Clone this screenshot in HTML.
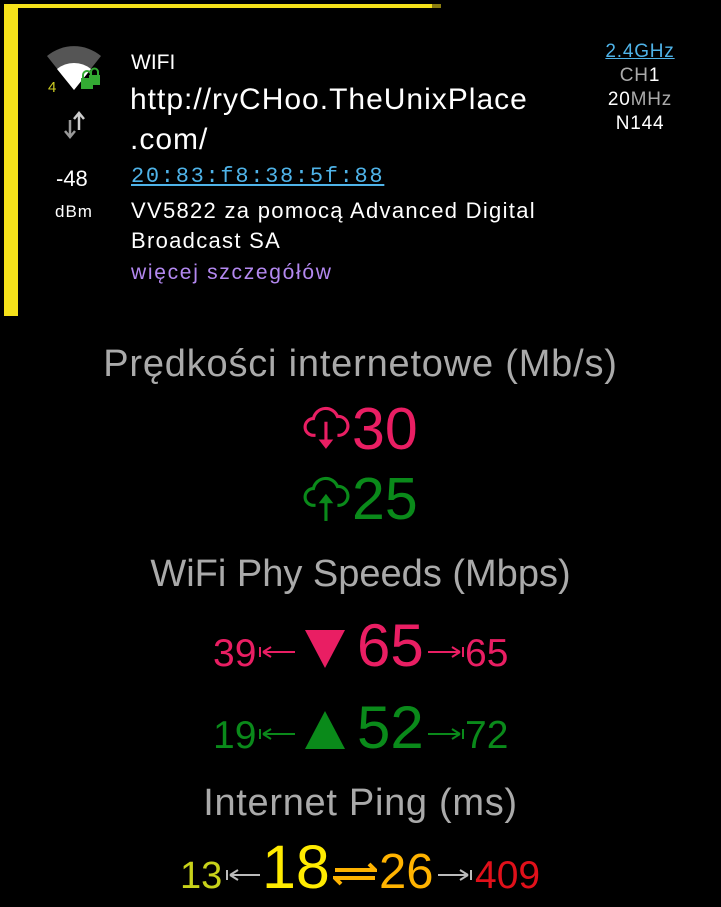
<!DOCTYPE html>
<html><head><meta charset="utf-8"><style>
html,body{margin:0;padding:0;background:#000;width:721px;height:907px;overflow:hidden;font-family:"Liberation Sans","DejaVu Sans",sans-serif;color:#fff}
.abs{position:absolute;white-space:nowrap;line-height:1}
.c{position:absolute;left:0;width:721px;text-align:center;white-space:nowrap;line-height:1}
</style></head><body>
<div class="abs" style="left:4px;top:4px;width:428px;height:4px;background:#f5e11a"></div>
<div class="abs" style="left:432px;top:4px;width:9px;height:4px;background:#8a7d10"></div>
<div class="abs" style="left:4px;top:4px;width:14px;height:312px;background:#f5e11a"></div>

<svg class="abs" style="left:44px;top:44px" width="64" height="56" viewBox="0 0 64 56">
<path d="M3 12 A42 42 0 0 1 57 12 L30 46 Z" fill="#555"/>
<path d="M13 25 A27 27 0 0 1 47 25 L30 46 Z" fill="#fff"/>
<text x="4" y="48" font-size="15" fill="#cc2" font-family="Liberation Sans">4</text>
<rect x="37" y="34" width="12" height="11" fill="#3a3"/><path d="M39 34v-3a4 4 0 0 1 8 0v3" stroke="#3a3" stroke-width="2" fill="none"/>
<rect x="45" y="31" width="11" height="10" fill="#3a3"/><path d="M47 31v-3a3.5 3.5 0 0 1 7 0v3" stroke="#3a3" stroke-width="2" fill="none"/>
</svg>
<svg class="abs" style="left:62px;top:110px" width="26" height="30" viewBox="0 0 26 30">
<path d="M8 10v16M3 21l5 6 5-6" stroke="#999" stroke-width="2.5" fill="none"/>
<path d="M17 20V4M12 9l5-6 5 6" stroke="#ccc" stroke-width="2.5" fill="none"/>
</svg>
<div class="abs" style="left:56px;top:168px;font-size:22px">-48</div>
<div class="abs" style="left:55px;top:203px;font-size:17px;letter-spacing:1px">dBm</div>

<div class="abs" style="left:131px;top:52px;font-size:21px">WIFI</div>
<div class="abs" style="left:130px;top:80px;font-size:30px;letter-spacing:1px;line-height:40px">http://ryCHoo.TheUnixPlace<br>.com/</div>
<div class="abs" style="left:131px;top:166px;font-size:22px;letter-spacing:1.7px;font-family:'Liberation Mono',monospace;color:#4fb3e8;text-decoration:underline">20:83:f8:38:5f:88</div>
<div class="abs" style="left:131px;top:196px;font-size:22px;letter-spacing:1.3px;line-height:30px">VV5822 za pomocą Advanced Digital<br>Broadcast SA</div>
<div class="abs" style="left:131px;top:262px;font-size:21px;letter-spacing:1.7px;color:#b388f0">więcej szczegółów</div>

<div class="abs" style="left:580px;top:40px;width:120px;text-align:center;font-size:19px;letter-spacing:0.8px;line-height:24px">
<span style="color:#4fb3e8;text-decoration:underline">2.4GHz</span><br><span style="color:#aaa">CH</span>1<br>20<span style="color:#aaa">MHz</span><br>N144</div>

<div class="c" style="top:345px;font-size:38px;letter-spacing:0.8px;color:#aaa">Prędkości internetowe (Mb/s)</div>

<svg class="abs" style="left:302px;top:404px" width="50" height="48" viewBox="0 0 46 46"><path d="M12 30H10a8 8 0 0 1 0-16 12 12 0 0 1 23-2 9 9 0 0 1 2 18h-2" stroke="#e91e63" stroke-width="3" fill="none"/><path d="M22 17v20" stroke="#e91e63" stroke-width="3"/><path d="M15 34h14l-7 9z" fill="#e91e63"/></svg>
<div class="abs" style="left:352px;top:400px;font-size:59px;color:#e91e63">30</div>
<svg class="abs" style="left:302px;top:474px" width="50" height="48" viewBox="0 0 46 46"><path d="M12 30H10a8 8 0 0 1 0-16 12 12 0 0 1 23-2 9 9 0 0 1 2 18h-2" stroke="#0a8a1a" stroke-width="3" fill="none"/><path d="M22 26v19" stroke="#0a8a1a" stroke-width="3"/><path d="M15 28h14l-7-9z" fill="#0a8a1a"/></svg>
<div class="abs" style="left:352px;top:470px;font-size:59px;color:#0a8a1a">25</div>

<div class="c" style="top:555px;font-size:38px;color:#aaa">WiFi Phy Speeds (Mbps)</div>

<div class="abs" style="left:213px;top:634px;font-size:39px;color:#e91e63">39</div>
<svg class="abs" style="left:258px;top:644px" width="38" height="16" viewBox="0 0 38 16"><path d="M2 3v10M5 8h32M5 8l8-5M5 8l8 5" stroke="#e91e63" stroke-width="2" fill="none"/></svg>
<svg class="abs" style="left:305px;top:630px" width="40" height="38" viewBox="0 0 40 38"><path d="M0 0h40L20 38z" fill="#e91e63"/></svg>
<div class="abs" style="left:357px;top:616px;font-size:60px;color:#e91e63">65</div>
<svg class="abs" style="left:427px;top:644px" width="38" height="16" viewBox="0 0 38 16"><path d="M36 3v10M1 8h32M33 8l-8-5M33 8l-8 5" stroke="#e91e63" stroke-width="2" fill="none"/></svg>
<div class="abs" style="left:465px;top:634px;font-size:39px;color:#e91e63">65</div>

<div class="abs" style="left:213px;top:716px;font-size:39px;color:#0a8a1a">19</div>
<svg class="abs" style="left:258px;top:726px" width="38" height="16" viewBox="0 0 38 16"><path d="M2 3v10M5 8h32M5 8l8-5M5 8l8 5" stroke="#0a8a1a" stroke-width="2" fill="none"/></svg>
<svg class="abs" style="left:305px;top:711px" width="40" height="38" viewBox="0 0 40 38"><path d="M0 38h40L20 0z" fill="#0a8a1a"/></svg>
<div class="abs" style="left:357px;top:698px;font-size:60px;color:#0a8a1a">52</div>
<svg class="abs" style="left:427px;top:726px" width="38" height="16" viewBox="0 0 38 16"><path d="M36 3v10M1 8h32M33 8l-8-5M33 8l-8 5" stroke="#0a8a1a" stroke-width="2" fill="none"/></svg>
<div class="abs" style="left:465px;top:716px;font-size:39px;color:#0a8a1a">72</div>

<div class="c" style="top:784px;font-size:38px;letter-spacing:0.7px;color:#aaa">Internet Ping (ms)</div>

<div class="abs" style="left:180px;top:857px;font-size:38px;color:#c8d21a">13</div>
<svg class="abs" style="left:225px;top:867px" width="36" height="16" viewBox="0 0 36 16"><path d="M2 3v10M5 8h30M5 8l8-5M5 8l8 5" stroke="#bbb" stroke-width="2" fill="none"/></svg>
<div class="abs" style="left:262px;top:837px;font-size:61px;color:#ffeb00">18</div>
<svg class="abs" style="left:333px;top:862px" width="44" height="24" viewBox="0 0 44 24"><path d="M2 8h40l-6-6M42 16H2l6 6" stroke="#ffb300" stroke-width="4" fill="none"/></svg>
<div class="abs" style="left:379px;top:848px;font-size:49px;color:#ffb300">26</div>
<svg class="abs" style="left:437px;top:867px" width="36" height="16" viewBox="0 0 36 16"><path d="M34 3v10M1 8h30M31 8l-8-5M31 8l-8 5" stroke="#bbb" stroke-width="2" fill="none"/></svg>
<div class="abs" style="left:475px;top:856px;font-size:39px;color:#e0101a">409</div>
</body></html>
